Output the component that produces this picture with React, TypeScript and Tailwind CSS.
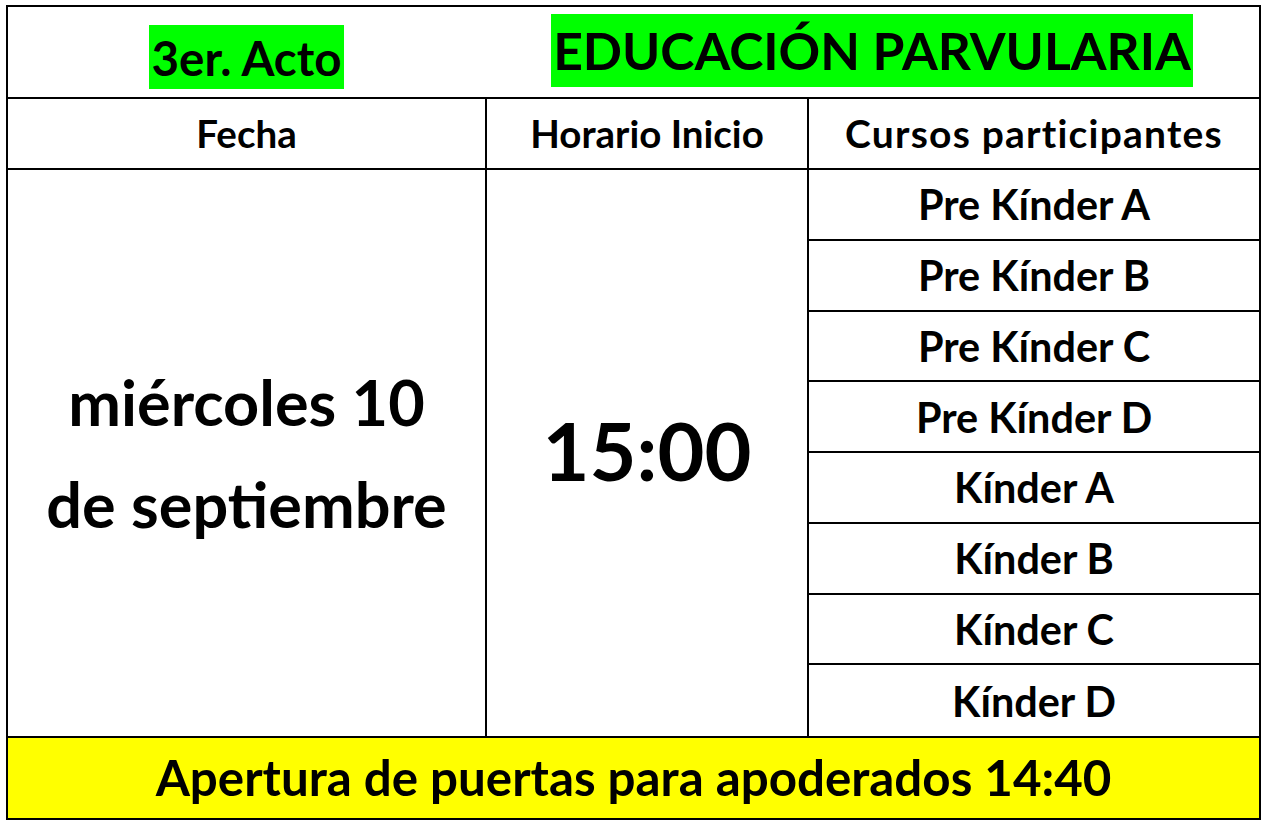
import React from 'react';

const cursos = [
  'Pre Kínder A',
  'Pre Kínder B',
  'Pre Kínder C',
  'Pre Kínder D',
  'Kínder A',
  'Kínder B',
  'Kínder C',
  'Kínder D',
];

export default function App() {
  return (
    <div className="min-h-[831px] w-[1268px] bg-white pl-[6px] pt-[5px] font-['Lato',sans-serif] font-bold text-black">
      <div className="w-[1255px] border-2 border-black">
        {/* title row */}
        <div className="grid h-[92px] grid-cols-[477px_1fr] border-b-2 border-black">
          <div className="flex justify-center pt-[18px]">
            <span className="inline-block h-[64px] bg-[#00ff00] px-[2px] text-[47.5px] leading-[66px]">3er. Acto</span>
          </div>
          <div className="flex justify-center pt-[7px]">
            <span className="inline-block h-[73px] bg-[#00ff00] px-[2px] text-[51.6px] leading-[73px]">EDUCACIÓN PARVULARIA</span>
          </div>
        </div>

        {/* header row */}
        <div className="grid h-[71px] grid-cols-[479px_322px_1fr] border-b-2 border-black text-[38.5px]">
          <div className="flex items-center justify-center border-r-2 border-black">Fecha</div>
          <div className="flex items-center justify-center border-r-2 border-black">Horario Inicio</div>
          <div className="flex items-center justify-center text-[39px] tracking-[1.2px]">Cursos participantes</div>
        </div>

        {/* body */}
        <div className="grid grid-cols-[479px_322px_1fr] border-b-2 border-black">
          <div className="flex flex-col items-center justify-center border-r-2 border-black text-[63px] leading-[102px]">
            <span>miércoles 10</span>
            <span>de septiembre</span>
          </div>
          <div className="flex items-center justify-center border-r-2 border-black pb-[6px] text-[81px]">15:00</div>
          <div className="flex flex-col">
            {cursos.map((c, i) => (
              <div
                key={c}
                className={`flex h-[70.75px] items-center justify-center text-[41.4px] ${i < cursos.length - 1 ? 'border-b-2 border-black' : ''}`}
              >
                {c}
              </div>
            ))}
          </div>
        </div>

        {/* footer */}
        <div className="flex h-[80px] items-center justify-center bg-[#ffff00] text-[49.3px]">
          Apertura de puertas para apoderados 14:40
        </div>
      </div>
    </div>
  );
}
